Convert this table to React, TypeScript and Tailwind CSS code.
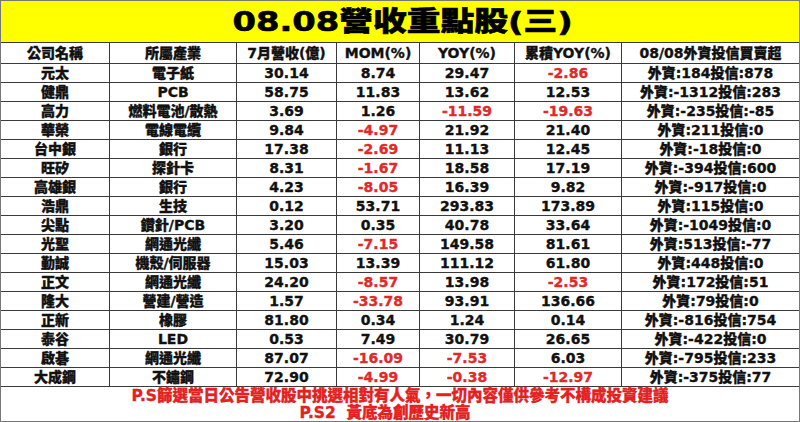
type Row = {
  name: string;
  sector: string;
  rev: string;
  mom: string;
  yoy: string;
  cum: string;
  flow: string;
};

const rows: Row[] = [
  { name: '元太', sector: '電子紙', rev: '30.14', mom: '8.74', yoy: '29.47', cum: '-2.86', flow: '外資:184投信:878' },
  { name: '健鼎', sector: 'PCB', rev: '58.75', mom: '11.83', yoy: '13.62', cum: '12.53', flow: '外資:-1312投信:283' },
  { name: '高力', sector: '燃料電池/散熱', rev: '3.69', mom: '1.26', yoy: '-11.59', cum: '-19.63', flow: '外資:-235投信:-85' },
  { name: '華榮', sector: '電線電纜', rev: '9.84', mom: '-4.97', yoy: '21.92', cum: '21.40', flow: '外資:211投信:0' },
  { name: '台中銀', sector: '銀行', rev: '17.38', mom: '-2.69', yoy: '11.13', cum: '12.45', flow: '外資:-18投信:0' },
  { name: '旺矽', sector: '探針卡', rev: '8.31', mom: '-1.67', yoy: '18.58', cum: '17.19', flow: '外資:-394投信:600' },
  { name: '高雄銀', sector: '銀行', rev: '4.23', mom: '-8.05', yoy: '16.39', cum: '9.82', flow: '外資:-917投信:0' },
  { name: '浩鼎', sector: '生技', rev: '0.12', mom: '53.71', yoy: '293.83', cum: '173.89', flow: '外資:115投信:0' },
  { name: '尖點', sector: '鑽針/PCB', rev: '3.20', mom: '0.35', yoy: '40.78', cum: '33.64', flow: '外資:-1049投信:0' },
  { name: '光聖', sector: '網通光纖', rev: '5.46', mom: '-7.15', yoy: '149.58', cum: '81.61', flow: '外資:513投信:-77' },
  { name: '勤誠', sector: '機殼/伺服器', rev: '15.03', mom: '13.39', yoy: '111.12', cum: '61.80', flow: '外資:448投信:0' },
  { name: '正文', sector: '網通光纖', rev: '24.20', mom: '-8.57', yoy: '13.98', cum: '-2.53', flow: '外資:172投信:51' },
  { name: '隆大', sector: '營建/營造', rev: '1.57', mom: '-33.78', yoy: '93.91', cum: '136.66', flow: '外資:79投信:0' },
  { name: '正新', sector: '橡膠', rev: '81.80', mom: '0.34', yoy: '1.24', cum: '0.14', flow: '外資:-816投信:754' },
  { name: '泰谷', sector: 'LED', rev: '0.53', mom: '7.49', yoy: '30.79', cum: '26.65', flow: '外資:-422投信:0' },
  { name: '啟碁', sector: '網通光纖', rev: '87.07', mom: '-16.09', yoy: '-7.53', cum: '6.03', flow: '外資:-795投信:233' },
  { name: '大成鋼', sector: '不鏽鋼', rev: '72.90', mom: '-4.99', yoy: '-0.38', cum: '-12.97', flow: '外資:-375投信:77' },
];

const headers = ['公司名稱', '所屬產業', '7月營收(億)', 'MOM(%)', 'YOY(%)', '累積YOY(%)', '08/08外資投信買賣超'];

const font = { fontFamily: '"DejaVu Sans", "Noto Sans CJK TC", sans-serif' };

function Cell({ children, last, red }: { children: React.ReactNode; last?: boolean; red?: boolean }) {
  return (
    <div
      className={
        'flex items-center justify-center border-b border-[#3a3a3a] whitespace-nowrap ' +
        (last ? '' : 'border-r ') +
        (red ? 'text-[#e02a2a]' : 'text-[#111]')
      }
    >
      {children}
    </div>
  );
}

const isNeg = (v: string) => v.startsWith('-');

export default function App() {
  return (
    <div
      className="w-[800px] h-[422px] flex flex-col border border-[#777] bg-white overflow-hidden"
      style={font}
    >
      <div className="h-[42px] shrink-0 flex items-center justify-center bg-[#ffff00] border-b border-[#3a3a3a]">
        <span className="text-[27px] font-black text-black leading-none scale-x-[1.25] inline-block pl-[4px] [-webkit-text-stroke:0.6px]">
          08.08營收重點股(三)
        </span>
      </div>

      <div className="grid grid-cols-[109px_127px_100px_83px_95px_107px_1fr] grid-rows-[21px] auto-rows-[19px] text-[14px] font-black leading-none [-webkit-text-stroke:0.35px]">
        {headers.map((h, i) => (
          <Cell key={h} last={i === headers.length - 1}>
            {h}
          </Cell>
        ))}
        {rows.map((r) => (
          <div key={r.name} className="contents">
            <Cell>{r.name}</Cell>
            <Cell>{r.sector}</Cell>
            <Cell>{r.rev}</Cell>
            <Cell red={isNeg(r.mom)}>{r.mom}</Cell>
            <Cell red={isNeg(r.yoy)}>{r.yoy}</Cell>
            <Cell red={isNeg(r.cum)}>{r.cum}</Cell>
            <Cell last>{r.flow}</Cell>
          </div>
        ))}
      </div>

      <div className="flex-1 pt-[1px] text-[15.5px] font-black leading-[17px] text-[#e3211f] text-center [-webkit-text-stroke:0.35px]">
        <div>P.S篩選當日公告營收股中挑選相對有人氣，一切內容僅供參考不構成投資建議</div>
        <div className="pr-[30px] whitespace-pre">P.S2  黃底為創歷史新高</div>
      </div>
    </div>
  );
}
